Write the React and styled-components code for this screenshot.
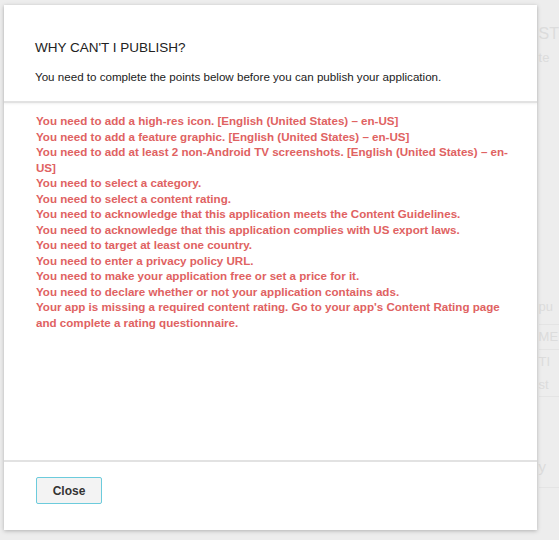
import React from 'react';
import styled, { createGlobalStyle } from 'styled-components';

const GlobalStyle = createGlobalStyle`
  html, body {
    margin: 0;
    padding: 0;
    background: #ececec;
    font-family: 'Liberation Sans', Arial, sans-serif;
  }
`;

const Page = styled.div`
  width: 559px;
  height: 540px;
  display: flex;
  overflow: hidden;
  background: #ededed;
`;

const Dialog = styled.div`
  margin: 5px 0 0 4px;
  width: 545px;
  height: 525px;
  background: #fff;
  display: flex;
  flex-direction: column;
  box-shadow: 0 1px 4px rgba(0, 0, 0, 0.25);
  position: relative;
  z-index: 1;
`;

const Header = styled.div`
  height: 98px;
  padding: 35px 31px 0;
  box-sizing: border-box;
  border-bottom: 2px solid #e2e2e2;
  box-shadow: 0 1px 2px rgba(0, 0, 0, 0.06);
`;

const Title = styled.h2`
  margin: 0;
  font-size: 13.5px;
  font-weight: 400;
  color: #222;
  line-height: 16px;
`;

const Subtitle = styled.p`
  margin: 13px 0 0;
  font-size: 11.6px;
  color: #222;
  line-height: 16px;
`;

const Body = styled.div`
  flex: 1;
  padding: 10px 26px 0 32px;
`;

const Issue = styled.div`
  font-size: 11.6px;
  font-weight: 700;
  color: #e06262;
  line-height: 15.5px;
`;

const Footer = styled.div`
  height: 70px;
  border-top: 2px solid #e2e2e2;
  display: flex;
  align-items: flex-start;
  padding: 15px 32px 0;
  box-sizing: border-box;
`;

const Button = styled.button`
  width: 66px;
  height: 27px;
  background: #f3f3f3;
  border: 1px solid #6ccbdc;
  border-radius: 2px;
  font-family: inherit;
  font-size: 12px;
  font-weight: 700;
  color: #333;
  cursor: pointer;
`;

const Behind = styled.div`
  flex: 1;
  display: flex;
  flex-direction: column;
  padding-left: 2px;
  color: #dcdcdc;
  font-size: 15px;
`;

const Ghost = styled.div`
  height: ${p => p.h}px;
  line-height: ${p => p.h}px;
  font-size: ${p => p.size || 13}px;
  border-bottom: ${p => (p.line ? '1px solid #e4e4e4' : 'none')};
  white-space: nowrap;
`;

const issues = [
  'You need to add a high-res icon. [English (United States) – en-US]',
  'You need to add a feature graphic. [English (United States) – en-US]',
  'You need to add at least 2 non-Android TV screenshots. [English (United States) – en-\u200BUS]',
  'You need to select a category.',
  'You need to select a content rating.',
  'You need to acknowledge that this application meets the Content Guidelines.',
  'You need to acknowledge that this application complies with US export laws.',
  'You need to target at least one country.',
  'You need to enter a privacy policy URL.',
  'You need to make your application free or set a price for it.',
  'You need to declare whether or not your application contains ads.',
  "Your app is missing a required content rating. Go to your app's Content Rating page and complete a rating questionnaire.",
];

export default function App() {
  return (
    <>
      <GlobalStyle />
      <Page>
        <Dialog>
          <Header>
            <Title>WHY CAN'T I PUBLISH?</Title>
            <Subtitle>You need to complete the points below before you can publish your application.</Subtitle>
          </Header>
          <Body>
            {issues.map(text => (
              <Issue key={text}>{text}</Issue>
            ))}
          </Body>
          <Footer>
            <Button>Close</Button>
          </Footer>
        </Dialog>
        <Behind>
          <Ghost h={22} />
          <Ghost h={24} size={16}>ST</Ghost>
          <Ghost h={24}>te</Ghost>
          <Ghost h={220} />
          <Ghost h={34} line>pu</Ghost>
          <Ghost h={24} line>ME</Ghost>
          <Ghost h={24}>TI</Ghost>
          <Ghost h={22} line>st</Ghost>
          <Ghost h={50} />
          <Ghost h={40} line size={15}>y</Ghost>
        </Behind>
      </Page>
    </>
  );
}
